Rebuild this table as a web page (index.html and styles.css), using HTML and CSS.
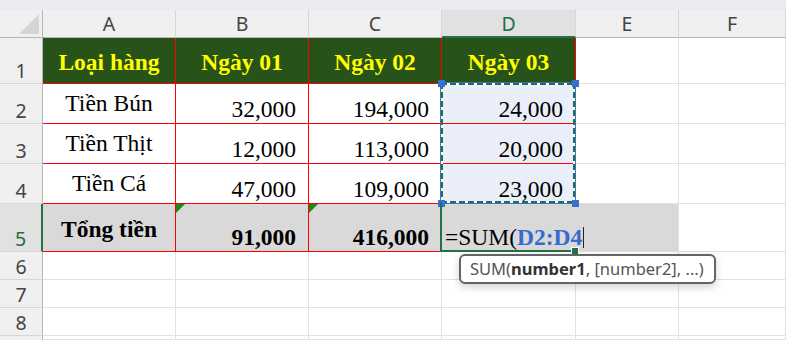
FILE: index.html
```html
<!DOCTYPE html>
<html lang="vi">
<head>
    <meta charset="UTF-8">
    <meta name="viewport" content="width=device-width, initial-scale=1.0">
    <title>Tổng tiền - Bảng tính</title>
    <link rel="stylesheet" href="styles.css">
</head>
<body>
    <div class="topbar"></div>

    <div class="sheet-wrap">
        <div class="sheet">
            <!-- tiêu đề cột -->
            <div class="corner"></div>
            <div class="col-head">A</div>
            <div class="col-head">B</div>
            <div class="col-head">C</div>
            <div class="col-head on">D</div>
            <div class="col-head">E</div>
            <div class="col-head">F</div>

            <!-- dòng 1 -->
            <div class="row-head">1</div>
            <div class="c t hdr">Loại hàng</div>
            <div class="c t hdr">Ngày 01</div>
            <div class="c t hdr">Ngày 02</div>
            <div class="c t hdr">Ngày 03</div>
            <div class="c"></div>
            <div class="c"></div>

            <!-- dòng 2 -->
            <div class="row-head">2</div>
            <div class="c t lbl">Tiền Bún</div>
            <div class="c t num">32,000</div>
            <div class="c t num">194,000</div>
            <div class="c t num sel">24,000</div>
            <div class="c"></div>
            <div class="c"></div>

            <!-- dòng 3 -->
            <div class="row-head">3</div>
            <div class="c t lbl">Tiền Thịt</div>
            <div class="c t num">12,000</div>
            <div class="c t num">113,000</div>
            <div class="c t num sel">20,000</div>
            <div class="c"></div>
            <div class="c"></div>

            <!-- dòng 4 -->
            <div class="row-head">4</div>
            <div class="c t lbl">Tiền Cá</div>
            <div class="c t num">47,000</div>
            <div class="c t num">109,000</div>
            <div class="c t num sel">23,000</div>
            <div class="c"></div>
            <div class="c"></div>

            <!-- dòng 5: tổng -->
            <div class="row-head on">5</div>
            <div class="c t lbl tot">Tổng tiền</div>
            <div class="c t num tot err">91,000</div>
            <div class="c t num tot err">416,000</div>
            <div class="c edit">=SUM(<span class="ref">D2:D4</span><span class="caret"></span></div>
            <div class="c gray"></div>
            <div class="c"></div>

            <!-- dòng trống -->
            <div class="row-head">6</div>
            <div class="c"></div><div class="c"></div><div class="c"></div><div class="c"></div><div class="c"></div><div class="c"></div>
            <div class="row-head">7</div>
            <div class="c"></div><div class="c"></div><div class="c"></div><div class="c"></div><div class="c"></div><div class="c"></div>
            <div class="row-head">8</div>
            <div class="c"></div><div class="c"></div><div class="c"></div><div class="c"></div><div class="c"></div><div class="c"></div>
            <div class="row-head last"></div>
            <div class="c last"></div><div class="c last"></div><div class="c last"></div><div class="c last"></div><div class="c last"></div><div class="c last"></div>
        </div>

        <!-- vùng tham chiếu D2:D4 -->
        <div class="marquee">
            <span class="handle tl"></span>
            <span class="handle tr"></span>
            <span class="handle bl"></span>
            <span class="handle br"></span>
        </div>

        <!-- ô đang sửa D5 -->
        <div class="active-cell"><span class="fill-handle"></span></div>

        <div class="tooltip">SUM(<b>number1</b>, [number2], ...)</div>
    </div>
</body>
</html>
```

FILE: styles.css
```css
* {
    margin: 0;
    padding: 0;
    box-sizing: border-box;
}

body {
    background: #fff;
    font-family: "Liberation Serif", "Times New Roman", serif;
    color: #000;
    overflow: hidden;
}

.topbar {
    height: 10px;
    background: #ebebef;
}

.sheet-wrap {
    position: relative;
}

.sheet {
    display: grid;
    grid-template-columns: 43px 133px 133px 133px 134px 103px 1fr;
    grid-template-rows: 28px 46px 40px 40px 40px 48px 28px 28px 28px 4px;
}

/* tiêu đề hàng / cột */
.corner {
    position: relative;
    background: #f0f0f0;
    border-right: 1px solid #b5b5b5;
    border-bottom: 1px solid #b5b5b5;
}

.corner::after {
    content: "";
    position: absolute;
    right: 3px;
    bottom: 3px;
    width: 20px;
    height: 20px;
    background: #d5d5d5;
    clip-path: polygon(100% 0, 100% 100%, 0 100%);
}

.col-head,
.row-head {
    background: #f0f0f0;
    font-family: "Noto Sans", sans-serif;
    font-size: 19.5px;
    color: #444;
    display: flex;
    justify-content: center;
}

.col-head {
    align-items: center;
    border-right: 1px solid #d6d6d6;
    border-bottom: 1px solid #b5b5b5;
}

.col-head.on {
    background: #e1e1e1;
    color: #1e6e41;
    border-bottom: 2px solid #217346;
}

.row-head {
    align-items: flex-end;
    line-height: 1.3;
    border-right: 1px solid #b5b5b5;
    border-bottom: 1px solid #d6d6d6;
}

.row-head.on {
    background: #e1e1e1;
    color: #1e6e41;
    border-right: 2px solid #217346;
}

.last {
    border-bottom: none;
}

/* ô */
.c {
    position: relative;
    font-size: 23.5px;
    white-space: nowrap;
    border-right: 1px solid #e1e1e1;
    border-bottom: 1px solid #e1e1e1;
}

.c.t {
    border-color: #f00;
}

.hdr {
    background: #27521a;
    color: #ff0;
    font-weight: bold;
    display: flex;
    align-items: center;
    justify-content: center;
    padding-top: 4px;
}

.lbl {
    display: flex;
    align-items: center;
    justify-content: center;
}

.num {
    display: flex;
    align-items: flex-end;
    justify-content: flex-end;
    padding-right: 12px;
}

.sel {
    background: #e9eef8;
}

.tot {
    background: #d9d9d9;
    font-weight: bold;
}

.lbl.tot {
    padding-top: 3px;
}

.gray {
    background: #d9d9d9;
    border-right-color: #e1e1e1;
}

/* tam giác báo lỗi xanh */
.err::before {
    content: "";
    position: absolute;
    top: 0;
    left: 0;
    border-top: 9px solid #188a18;
    border-right: 9px solid transparent;
}

.edit {
    z-index: 2;
    background: #d9d9d9;
    border-right-color: #d9d9d9;
    display: flex;
    align-items: flex-end;
    padding-left: 3px;
}

.edit .ref {
    color: #356ccd;
    font-weight: bold;
}

.caret {
    flex-shrink: 0;
    width: 1px;
    height: 21px;
    margin-left: 1px;
    margin-bottom: 3px;
    background: #222;
}

/* khung tham chiếu */
.marquee {
    position: absolute;
    left: 440px;
    top: 72px;
    width: 136px;
    height: 122px;
    border: 1px solid #3a6fd2;
    z-index: 3;
}

.marquee::before {
    content: "";
    position: absolute;
    inset: 0;
    background:
        repeating-linear-gradient(90deg, #217346 0 6px, #fff 6px 9px) top / 100% 2px no-repeat,
        repeating-linear-gradient(90deg, #217346 0 6px, #fff 6px 9px) bottom / 100% 2px no-repeat,
        repeating-linear-gradient(180deg, #217346 0 6px, #fff 6px 9px) left / 2px 100% no-repeat,
        repeating-linear-gradient(180deg, #217346 0 6px, #fff 6px 9px) right / 2px 100% no-repeat;
}

.handle {
    position: absolute;
    width: 7px;
    height: 7px;
    background: #3a6fd2;
}

.handle.tl { left: -3px; top: -3px; }
.handle.tr { right: -4px; top: -3px; }
.handle.bl { left: -3px; bottom: -4px; }
.handle.br { right: -4px; bottom: -4px; }

.active-cell {
    position: absolute;
    left: 440px;
    top: 193px;
    width: 135px;
    height: 49px;
    border-left: 2px solid #217346;
    border-bottom: 2px solid #217346;
    z-index: 3;
}

.fill-handle {
    position: absolute;
    right: -3px;
    bottom: -4px;
    width: 6px;
    height: 6px;
    background: #217346;
    outline: 1px solid #fff;
}

/* gợi ý hàm */
.tooltip {
    position: absolute;
    left: 459px;
    top: 244px;
    width: 257px;
    height: 30px;
    padding-left: 9px;
    background: #fff;
    border: 2px solid #646464;
    border-radius: 6px;
    box-shadow: 0 3px 8px rgba(0, 0, 0, 0.18);
    font-family: "Noto Sans", sans-serif;
    font-size: 16.5px;
    line-height: 25px;
    color: #555;
    white-space: nowrap;
    z-index: 4;
}

.tooltip b {
    color: #333;
}
```
